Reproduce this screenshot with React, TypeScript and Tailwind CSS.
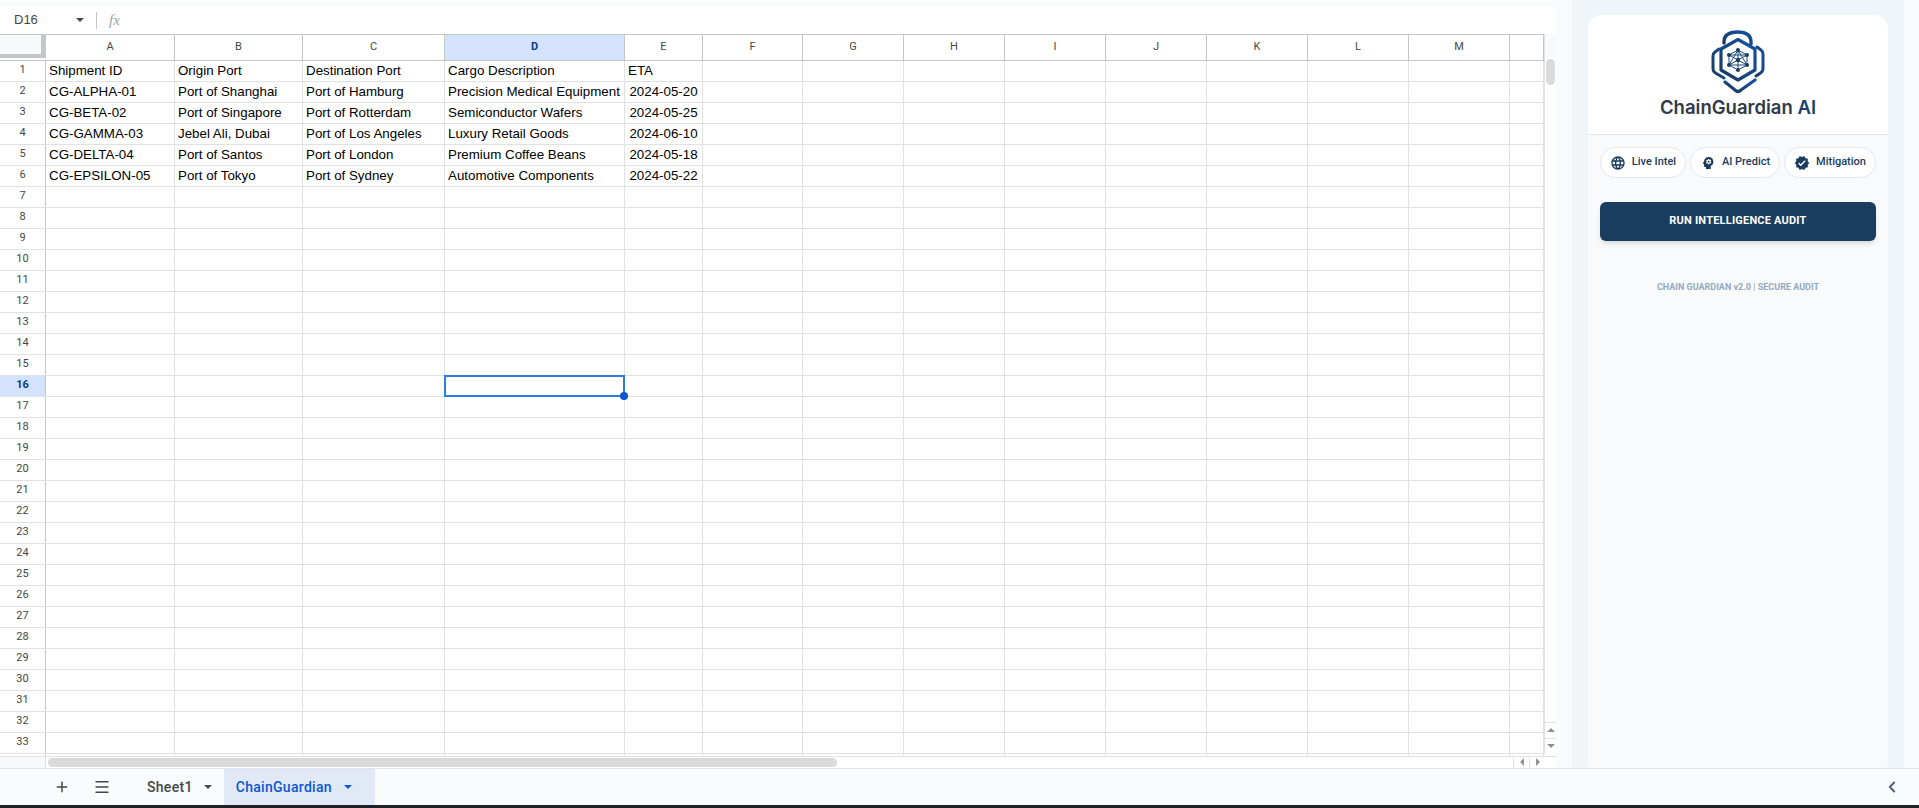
import { Plus, Menu, ChevronLeft } from "lucide-react";
import { MdLanguage, MdPsychology, MdVerified } from "react-icons/md";

const columns = [
  { label: "A", width: "w-[129px]" },
  { label: "B", width: "w-[128px]" },
  { label: "C", width: "w-[142px]" },
  { label: "D", width: "w-[180px]" },
  { label: "E", width: "w-[78px]" },
  { label: "F", width: "w-[100px]" },
  { label: "G", width: "w-[101px]" },
  { label: "H", width: "w-[101px]" },
  { label: "I", width: "w-[101px]" },
  { label: "J", width: "w-[101px]" },
  { label: "K", width: "w-[101px]" },
  { label: "L", width: "w-[101px]" },
  { label: "M", width: "w-[101px]" },
  { label: "", width: "w-[34px]" },
];

const data = [
  ["Shipment ID", "Origin Port", "Destination Port", "Cargo Description", "ETA"],
  ["CG-ALPHA-01", "Port of Shanghai", "Port of Hamburg", "Precision Medical Equipment", "2024-05-20"],
  ["CG-BETA-02", "Port of Singapore", "Port of Rotterdam", "Semiconductor Wafers", "2024-05-25"],
  ["CG-GAMMA-03", "Jebel Ali, Dubai", "Port of Los Angeles", "Luxury Retail Goods", "2024-06-10"],
  ["CG-DELTA-04", "Port of Santos", "Port of London", "Premium Coffee Beans", "2024-05-18"],
  ["CG-EPSILON-05", "Port of Tokyo", "Port of Sydney", "Automotive Components", "2024-05-22"],
];

const rows = Array.from({ length: 34 }, (_, i) => i + 1);

function Logo() {
  return (
    <svg viewBox="0 0 54 64" className="w-[54px] h-[64px]">
      <defs>
        <linearGradient id="lg" x1="0" y1="1" x2="1" y2="0">
          <stop offset="0" stopColor="#1a3c5e" />
          <stop offset="1" stopColor="#1450a8" />
        </linearGradient>
      </defs>
      <g fill="none" stroke="url(#lg)" strokeLinejoin="round" strokeLinecap="round">
        <path d="M13 13 V12 C13 4 20 2 26.5 2 C33 2 40 4 40 12 V14" strokeWidth="3.4" />
        <path d="M27 9.5 L44 19 V40 L27 50 L10 40 V19 Z" strokeWidth="3.2" />
        <path d="M8 19 L4 22 C2.5 23 2 24 2 26 V39 C2 41 3 42 4.5 43 L13 48" strokeWidth="3" />
        <path d="M46 17 L50 20 C51.5 21 52 22 52 24 V39 C52 41 51 42 49.5 43 L45 46" strokeWidth="3" />
        <path d="M14 52 L24 60 C26 62 28 62 30 60 L44 50" strokeWidth="3.2" />
      </g>
      <g stroke="#1a4a7c" strokeWidth="1" fill="none">
        <path d="M27 20 L36 25 V35 L27 40 L18 35 V25 Z" />
        <path d="M27 20 L27 40 M18 25 L36 35 M36 25 L18 35 M27 20 L36 35 M27 20 L18 35 M18 25 L36 25 M18 35 L36 35" />
      </g>
      <g fill="#1a3c5e">
        <circle cx="27" cy="20" r="2" />
        <circle cx="36" cy="25" r="2" />
        <circle cx="36" cy="35" r="2" />
        <circle cx="27" cy="40" r="2" />
        <circle cx="18" cy="35" r="2" />
        <circle cx="18" cy="25" r="2" />
        <circle cx="27" cy="30" r="2.2" />
      </g>
    </svg>
  );
}

function Chip({ icon, label, width }: { icon: React.ReactNode; label: string; width: string }) {
  return (
    <div className={`${width} h-[31px] flex items-center justify-center gap-[6px] rounded-full border border-[#e2e8f0] bg-white text-[11px] font-medium text-[#1a3c5e]`}>
      {icon}
      <span>{label}</span>
    </div>
  );
}

function Sheet() {
  return (
    <div className="flex flex-col w-[1544px] font-['Liberation_Sans',Arial,sans-serif] text-[13.33px] text-black">
      <div className="flex h-[25px] border-t border-b border-[#c4c7c5] font-['Roboto',sans-serif] text-[11px] text-[#444746] box-content">
        <div className="w-[46px] h-[23px] shrink-0 border-r border-[#c4c7c5] bg-[#f8f9fa] relative">
          <div className="absolute right-0 bottom-0 w-[4px] h-full bg-[#c4c7c5]" />
          <div className="absolute right-0 bottom-0 h-[4px] w-full bg-[#c4c7c5]" />
        </div>
        {columns.map((c) => (
          <div
            key={c.label}
            className={`${c.width} shrink-0 flex items-center justify-center border-r border-[#c4c7c5] ${c.label === "D" ? "bg-[#d3e3fd] font-bold text-[#0b3a8a]" : ""}`}
          >
            {c.label}
          </div>
        ))}
      </div>
      <div className="h-[695px] overflow-hidden">
        {rows.map((r) => {
          const cells = data[r - 1];
          return (
            <div key={r} className="flex h-[21px] border-b border-[#e1e1e1]">
              <div
                className={`w-[46px] shrink-0 flex items-center justify-center border-r border-[#c4c7c5] font-['Roboto',sans-serif] text-[11px] ${r === 16 ? "bg-[#d3e3fd] font-bold text-[#0b3a8a]" : "text-[#444746]"}`}
              >
                {r}
              </div>
              {columns.map((c, ci) => (
                <div
                  key={c.label}
                  className={`${c.width} shrink-0 relative flex items-center border-r border-[#e1e1e1] whitespace-nowrap ${ci === 4 && r > 1 ? "justify-center" : "px-[3px]"}`}
                >
                  {cells?.[ci]}
                  {r === 16 && c.label === "D" && (
                    <>
                      <div className="absolute -left-px -top-px w-[181px] h-[22px] border-2 border-[#2b7de0]" />
                      <div className="absolute -right-[4px] -bottom-[4px] w-[8px] h-[8px] rounded-full bg-[#0b57d0] z-10" />
                    </>
                  )}
                </div>
              ))}
            </div>
          );
        })}
      </div>
    </div>
  );
}

export default function App() {
  return (
    <div className="h-[808px] w-[1919px] overflow-hidden flex flex-col bg-[#f9fbfd] font-['Roboto',sans-serif]">
      <div className="h-[768px] flex">
        <div className="w-[1556px] shrink-0 flex flex-col">
          <div className="h-[7px] bg-[#f9fbfd]" />
          <div className="h-[28px] bg-white flex items-center text-[#1f1f1f] text-[13px]">
            <span className="w-[76px] pl-[14px] font-['Liberation_Sans',sans-serif] text-[#444746]">D16</span>
            <div className="w-0 h-0 border-x-[4px] border-x-transparent border-t-[4px] border-t-[#444746]" />
            <div className="w-px h-[17px] bg-[#c4c7c5] ml-[12px]" />
            <span className="ml-[12px] font-['Liberation_Serif',serif] italic text-[15px] text-[#a0a3a6]">fx</span>
          </div>
          <div className="flex bg-white">
            <Sheet />
            <div className="w-[12px] h-[720px] flex flex-col border-l border-[#e1e1e1] bg-white">
              <div className="h-[24px] bg-[#f8f9fa]" />
              <div className="flex-1 px-[1px] pt-[1px]">
                <div className="w-[9px] h-[26px] rounded-full bg-[#dadada]" />
              </div>
              <div className="h-[16px] flex items-center justify-center border-t border-[#e1e1e1]">
                <div className="w-0 h-0 border-x-[4px] border-x-transparent border-b-[4px] border-b-[#8d9194]" />
              </div>
              <div className="h-[16px] flex items-center justify-center border-t border-[#e1e1e1]">
                <div className="w-0 h-0 border-x-[4px] border-x-transparent border-t-[4px] border-t-[#8d9194]" />
              </div>
            </div>
          </div>
          <div className="h-[13px] flex bg-white border-t border-[#e1e1e1]">
            <div className="w-[46px] bg-[#f8f9fa] border-r border-[#e1e1e1]" />
            <div className="w-[1467px] pl-[2px] pt-[1px]">
              <div className="w-[789px] h-[9px] rounded-full bg-[#dadada]" />
            </div>
            <div className="w-[16px] flex items-center justify-center border-l border-[#e1e1e1]">
              <div className="w-0 h-0 border-y-[4px] border-y-transparent border-r-[4px] border-r-[#8d9194]" />
            </div>
            <div className="w-[16px] flex items-center justify-center border-l border-[#e1e1e1]">
              <div className="w-0 h-0 border-y-[4px] border-y-transparent border-l-[4px] border-l-[#8d9194]" />
            </div>
          </div>
        </div>

        <div className="w-[16px] shrink-0" />

        <div className="w-[332px] shrink-0 bg-[#f0f5f9] px-[16px] pt-[15px] overflow-hidden">
          <div className="w-[300px] h-[760px] rounded-[14px] overflow-hidden bg-[#f8fafc]">
            <div className="h-[120px] bg-white border-b border-[#e2e8f0] flex flex-col items-center pt-[15px]">
              <Logo />
              <div className="font-['Inter',sans-serif] font-semibold text-[18.5px] leading-[22px] mt-[2px] text-[#2f3a48] whitespace-nowrap">
                ChainGuardian <span className="text-[#1a3f70]">AI</span>
              </div>
            </div>
            <div className="px-[12px] pt-[12px] flex flex-col items-center">
              <div className="w-[276px] flex gap-[4px]">
                <Chip width="w-[86px]" label="Live Intel" icon={<MdLanguage size={16} />} />
                <Chip width="w-[90px]" label="AI Predict" icon={<MdPsychology size={16} />} />
                <Chip width="w-[92px]" label="Mitigation" icon={<MdVerified size={16} />} />
              </div>
              <button className="mt-[24px] w-[276px] h-[39px] rounded-[6px] bg-[#1a3c5e] text-white text-[11px] font-bold tracking-[0.2px] shadow-md uppercase">
                Run Intelligence Audit
              </button>
              <div className="mt-[40px] text-[9px] font-bold text-[#94a9c0] whitespace-nowrap">
                CHAIN GUARDIAN v2.0 | SECURE AUDIT
              </div>
            </div>
          </div>
        </div>
        <div className="flex-1" />
      </div>

      <div className="h-[37px] border-t border-[#e1e3e6] bg-[#f9fbfd] flex items-center text-[14px] font-medium text-[#444746] tracking-[0.3px]">
        <Plus size={16} strokeWidth={2.2} className="ml-[54px] text-[#444746]" />
        <Menu size={18} strokeWidth={1.8} className="ml-[23px] text-[#444746]" />
        <span className="ml-[36px]">Sheet1</span>
        <div className="ml-[11px] w-0 h-0 border-x-[4px] border-x-transparent border-t-[4px] border-t-[#444746]" />
        <div className="ml-[12px] h-full w-[151px] bg-[#e1e9f7] text-[#0b57d0] flex items-center pl-[12px]">
          <span>ChainGuardian</span>
          <div className="ml-[12px] w-0 h-0 border-x-[4px] border-x-transparent border-t-[4px] border-t-[#0b57d0]" />
        </div>
        <ChevronLeft size={18} strokeWidth={2.4} className="ml-auto mr-[18px] text-[#4a5d78]" />
      </div>
      <div className="h-[3px] bg-[#202124]" />
    </div>
  );
}
